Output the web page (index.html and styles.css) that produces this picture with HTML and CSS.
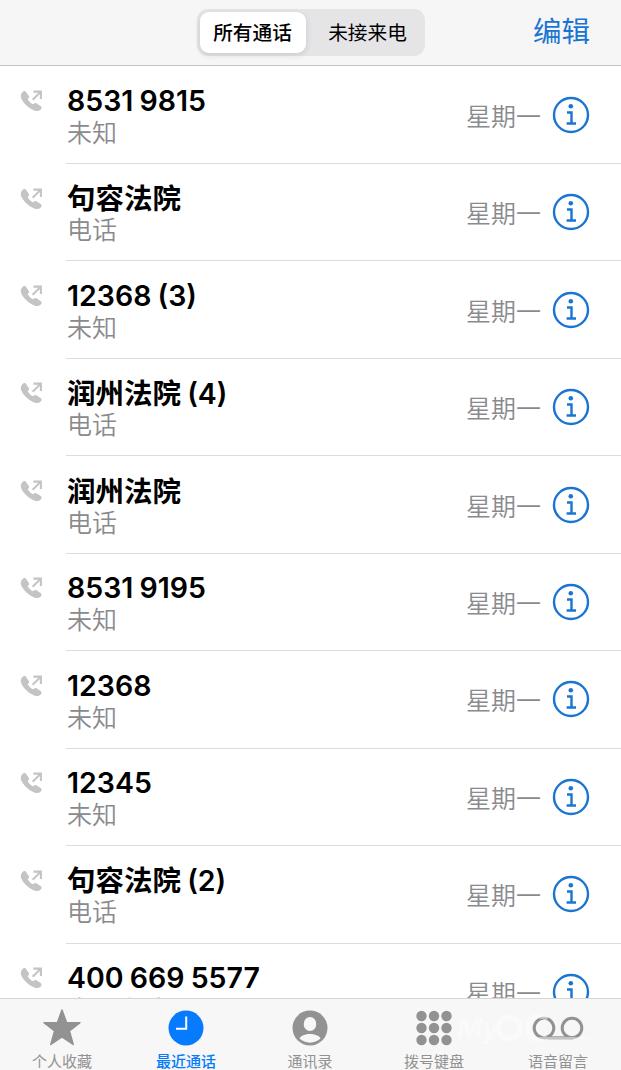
FILE: index.html
```html
<!DOCTYPE html>
<html lang="zh-CN">
  <head>
    <meta charset="UTF-8" />
    <meta name="viewport" content="width=device-width, initial-scale=1.0" />
    <title>最近通话</title>
    <link rel="stylesheet" href="styles.css">
  </head>
  <body>
    <!-- icons shared by every row -->
    <svg class="sprite" aria-hidden="true">
      <symbol id="outgoing" viewBox="0 0 24 24">
        <path d="M2 3.800C3.200 2.300 4.600 1.600 5.800 2.400L9.200 7.200C9.800 8.200 9.500 9 8.800 9.700L8 10.600C9.300 12.700 11.400 14.800 13.600 16L14.700 15.100C15.500 14.400 16.300 14.400 17.200 14.900L21.800 18.100C23.100 19.100 22.600 20.800 20.700 22.300C15.500 26 1.200 14.500 .8 7.500C.7 6 1.200 4.800 2 3.800Z" fill="currentColor" />
        <path d="M14 2.700H21.800V10.500M21.500 3L13.200 11.300" fill="none" stroke="currentColor" stroke-width="2.200" />
      </symbol>
      <symbol id="info" viewBox="0 0 38 38">
        <circle cx="19" cy="19" r="17" fill="none" stroke="currentColor" stroke-width="2.400" />
        <circle cx="18.800" cy="10.300" r="2.300" fill="currentColor" />
        <path d="M15 16.500H19.500V27.500M14.600 27.500H24" fill="none" stroke="currentColor" stroke-width="2.400" />
      </symbol>
    </svg>

    <header class="topbar">
      <div class="segment">
        <button class="seg active">所有通话</button>
        <button class="seg">未接来电</button>
      </div>
      <a class="edit" href="#">编辑</a>
    </header>

    <main class="calls" id="calls"></main>

    <nav class="tabbar">
      <a class="tab" href="#">
        <svg viewBox="0 0 40 40"><path d="M20 2L24.500 14.400L38 14.700L27.400 22.900L31.200 36.500L20 28.800L8.800 36.500L12.600 22.900L2 14.700L15.500 14.400Z" fill="currentColor" stroke="currentColor" stroke-width="1.500" stroke-linejoin="round" /></svg>
        <span>个人收藏</span>
      </a>
      <a class="tab current" href="#">
        <svg viewBox="0 0 40 40"><circle cx="20" cy="20" r="17.500" fill="currentColor" /><path d="M20.200 8.500V20.800H10" fill="none" stroke="#fff" stroke-width="2" /></svg>
        <span>最近通话</span>
      </a>
      <a class="tab" href="#">
        <svg viewBox="0 0 40 40"><circle cx="20" cy="20" r="17.500" fill="currentColor" /><ellipse cx="20" cy="16" rx="6.300" ry="7" fill="#f7f7f7" /><path d="M9.500 30.500C12 24.500 28 24.500 30.500 30.500C25 36 15 36 9.500 30.500Z" fill="#f7f7f7" /></svg>
        <span>通讯录</span>
      </a>
      <a class="tab" href="#">
        <svg viewBox="0 0 40 40" fill="currentColor">
          <circle cx="7.500" cy="8" r="5.200" /><circle cx="20" cy="8" r="5.200" /><circle cx="32.500" cy="8" r="5.200" />
          <circle cx="7.500" cy="20" r="5.200" /><circle cx="20" cy="20" r="5.200" /><circle cx="32.500" cy="20" r="5.200" />
          <circle cx="7.500" cy="32" r="5.200" /><circle cx="20" cy="32" r="5.200" /><circle cx="32.500" cy="32" r="5.200" />
        </svg>
        <span>拨号键盘</span>
      </a>
      <a class="tab" href="#">
        <svg class="wide" viewBox="0 0 54 40" fill="none" stroke="currentColor" stroke-width="3"><circle cx="13" cy="20" r="9.800" /><circle cx="41" cy="20" r="9.800" /><path d="M13 29.800H41" /></svg>
        <span>语音留言</span>
      </a>
      <svg class="watermark" viewBox="0 0 140 50">
        <text x="2" y="28">My</text>
        <circle cx="54" cy="18" r="11" />
        <path d="M92 9A12 12 0 1 0 92 27" />
        <path d="M74 28H134" />
      </svg>
    </nav>

    <script>
      const calls = [
        ['8531 9815', '未知'],
        ['句容法院', '电话'],
        ['12368 (3)', '未知'],
        ['润州法院 (4)', '电话'],
        ['润州法院', '电话'],
        ['8531 9195', '未知'],
        ['12368', '未知'],
        ['12345', '未知'],
        ['句容法院 (2)', '电话'],
        ['400 669 5577', '中国大陆'],
      ];

      document.getElementById('calls').innerHTML = calls
        .map(
          ([name, kind]) => `
        <div class="call">
          <svg class="outgoing"><use href="#outgoing" /></svg>
          <div class="detail">
            <div class="who">
              <div class="name${/^\d/.test(name) ? '' : ' contact'}">${name}</div>
              <div class="kind">${kind}</div>
            </div>
            <div class="day">星期一</div>
            <svg class="info"><use href="#info" /></svg>
          </div>
        </div>`
        )
        .join('');
    </script>
  </body>
</html>
```
FILE: styles.css
```css
* {
  box-sizing: border-box;
}
body {
  margin: 0;
  height: 1070px;
  display: flex;
  flex-direction: column;
  overflow: hidden;
  background: #fff;
  color: #000;
  font-family: Inter, 'Noto Sans CJK SC', sans-serif;
}
a {
  color: inherit;
  text-decoration: none;
}
.sprite {
  display: none;
}

/* top bar */
.topbar {
  flex: none;
  height: 66px;
  display: grid;
  grid-template-columns: 1fr 228px 1fr;
  align-items: center;
  background: #f6f6f7;
  border-bottom: 1px solid #c3c3c5;
}
.segment {
  grid-column: 2;
  height: 47px;
  margin-top: -1px;
  display: flex;
  padding: 3px;
  border-radius: 11px;
  background: #e5e5e7;
}
.seg {
  flex: 1;
  padding: 0 0 2px 8px;
  border: 0;
  border-radius: 9px;
  background: none;
  font: 400 19.7px/39px 'Noto Sans CJK SC', sans-serif;
  color: #000;
}
.seg.active {
  flex: 0 0 106px;
  padding: 0 0 2px;
  font-weight: 500;
  background: #fff;
  box-shadow: 0 2px 6px rgba(0, 0, 0, 0.12);
}
.edit {
  justify-self: end;
  margin: -1px 31px 0 0;
  font-size: 28.5px;
  line-height: 40px;
  color: #1a75d2;
}

/* call list */
.calls {
  flex: 1;
  min-height: 0;
  padding-top: 0.6px;
  overflow: hidden;
}
.call {
  height: 97.45px;
  display: flex;
  padding-left: 20px;
}
.outgoing {
  flex: none;
  width: 23px;
  height: 23px;
  margin: 22.5px 23px 0 0;
  color: #c4c4c6;
}
.detail {
  flex: 1;
  display: flex;
  align-items: center;
  padding-right: 31px;
  border-bottom: 1px solid #dcdcde;
}
.who {
  flex: 1;
  align-self: flex-start;
  padding: 17.4px 0 0 1px;
}
.name {
  height: 34px;
  font-size: 28.5px;
  font-weight: 600;
  line-height: 34px;
  word-spacing: -1px;
  white-space: nowrap;
}
.name.contact {
  line-height: 36px;
}
.kind {
  margin-top: -1px;
  font-size: 25px;
  font-weight: 350;
  line-height: 32px;
  color: #8a8a8e;
}
.day {
  font-size: 25px;
  font-weight: 350;
  line-height: 32px;
  padding-top: 4px;
  margin-right: 1px;
  color: #8a8a8e;
}
.info {
  width: 38px;
  height: 38px;
  margin-left: 10px;
  color: #1a75d2;
}

/* bottom tabs */
.tabbar {
  position: relative;
  flex: none;
  height: 72px;
  display: grid;
  grid-template-columns: repeat(5, 1fr);
  padding-right: 1px;
  background: #f7f7f7;
  border-top: 1px solid #d5d5d7;
}
.tab {
  display: flex;
  flex-direction: column;
  align-items: center;
  padding-top: 9px;
  font-size: 15px;
  line-height: 20px;
  color: #929292;
}
.tab svg {
  width: 40px;
  height: 40px;
}
.tab svg.wide {
  width: 54px;
}
.tab span {
  margin-top: 4px;
}
.tab.current {
  color: #067bfd;
  font-weight: 500;
}
.watermark {
  position: absolute;
  left: 455px;
  top: 11px;
  width: 140px;
  height: 50px;
  font: italic 700 27px Inter, sans-serif;
  fill: #fff;
  opacity: 0.45;
  pointer-events: none;
}
.watermark circle,
.watermark path {
  fill: none;
  stroke: #fff;
  stroke-width: 5;
}
.watermark path:last-child {
  stroke-width: 2;
}
```
